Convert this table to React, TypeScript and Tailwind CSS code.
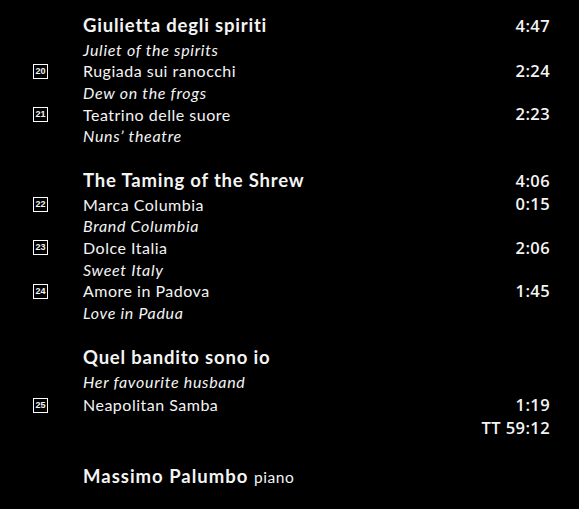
import React from 'react';

type Line = { num?: number; text: string; italic?: boolean; time?: string };
type Group = { title: string; time?: string; lines: Line[] };

const groups: Group[] = [
  {
    title: 'Giulietta degli spiriti',
    time: '4:47',
    lines: [
      { text: 'Juliet of the spirits', italic: true },
      { num: 20, text: 'Rugiada sui ranocchi', time: '2:24' },
      { text: 'Dew on the frogs', italic: true },
      { num: 21, text: 'Teatrino delle suore', time: '2:23' },
      { text: 'Nuns\u2019 theatre', italic: true },
    ],
  },
  {
    title: 'The Taming of the Shrew',
    time: '4:06',
    lines: [
      { num: 22, text: 'Marca Columbia', time: '0:15' },
      { text: 'Brand Columbia', italic: true },
      { num: 23, text: 'Dolce Italia', time: '2:06' },
      { text: 'Sweet Italy', italic: true },
      { num: 24, text: 'Amore in Padova', time: '1:45' },
      { text: 'Love in Padua', italic: true },
    ],
  },
  {
    title: 'Quel bandito sono io',
    lines: [
      { text: 'Her favourite husband', italic: true },
      { num: 25, text: 'Neapolitan Samba', time: '1:19' },
      { text: '', time: 'TT 59:12' },
    ],
  },
];

const TrackBox: React.FC<{ n: number }> = ({ n }) => (
  <div className="w-[15px] h-[15px] border border-white flex items-center justify-center text-[9px] font-bold leading-none font-['Liberation_Sans',sans-serif]">
    {n}
  </div>
);

const App: React.FC = () => {
  return (
    <div className="w-[579px] h-[509px] bg-black text-[#f4f4f4] font-['Lato',sans-serif] pl-[33px] pr-[29px] pt-[13px] overflow-hidden">
      {groups.map((g, gi) => (
        <div key={gi} className={gi > 0 ? 'mt-[21px]' : ''}>
          {/* titolo */}
          <div className="flex items-center h-[26px]">
            <div className="w-[50px]" />
            <div className="flex-1 text-[18.5px] font-bold tracking-[0.8px]">{g.title}</div>
            {g.time && <div className="text-[16.5px] font-semibold tracking-[0.4px] font-['Open_Sans',sans-serif]">{g.time}</div>}
          </div>
          {g.lines.map((l, li) => (
            <div key={li} className={`flex items-center ${gi === 2 ? 'h-[23px]' : 'h-[21.6px]'}`}>
              <div className="w-[50px]">{l.num && <TrackBox n={l.num} />}</div>
              <div className={`flex-1 text-[16px] ${l.italic ? 'italic tracking-[0.7px]' : 'tracking-[0.5px]'}`}>{l.text}</div>
              {l.time && <div className="text-[16.5px] font-semibold tracking-[0.4px] font-['Open_Sans',sans-serif]">{l.time}</div>}
            </div>
          ))}
        </div>
      ))}
      <div className="flex items-center h-[26px] mt-[24px]">
        <div className="w-[50px]" />
        <div className="text-[18.5px] font-bold tracking-[1px]">
          Massimo Palumbo <span className="text-[15.5px] font-normal tracking-[0.6px]">piano</span>
        </div>
      </div>
    </div>
  );
};

export default App;
